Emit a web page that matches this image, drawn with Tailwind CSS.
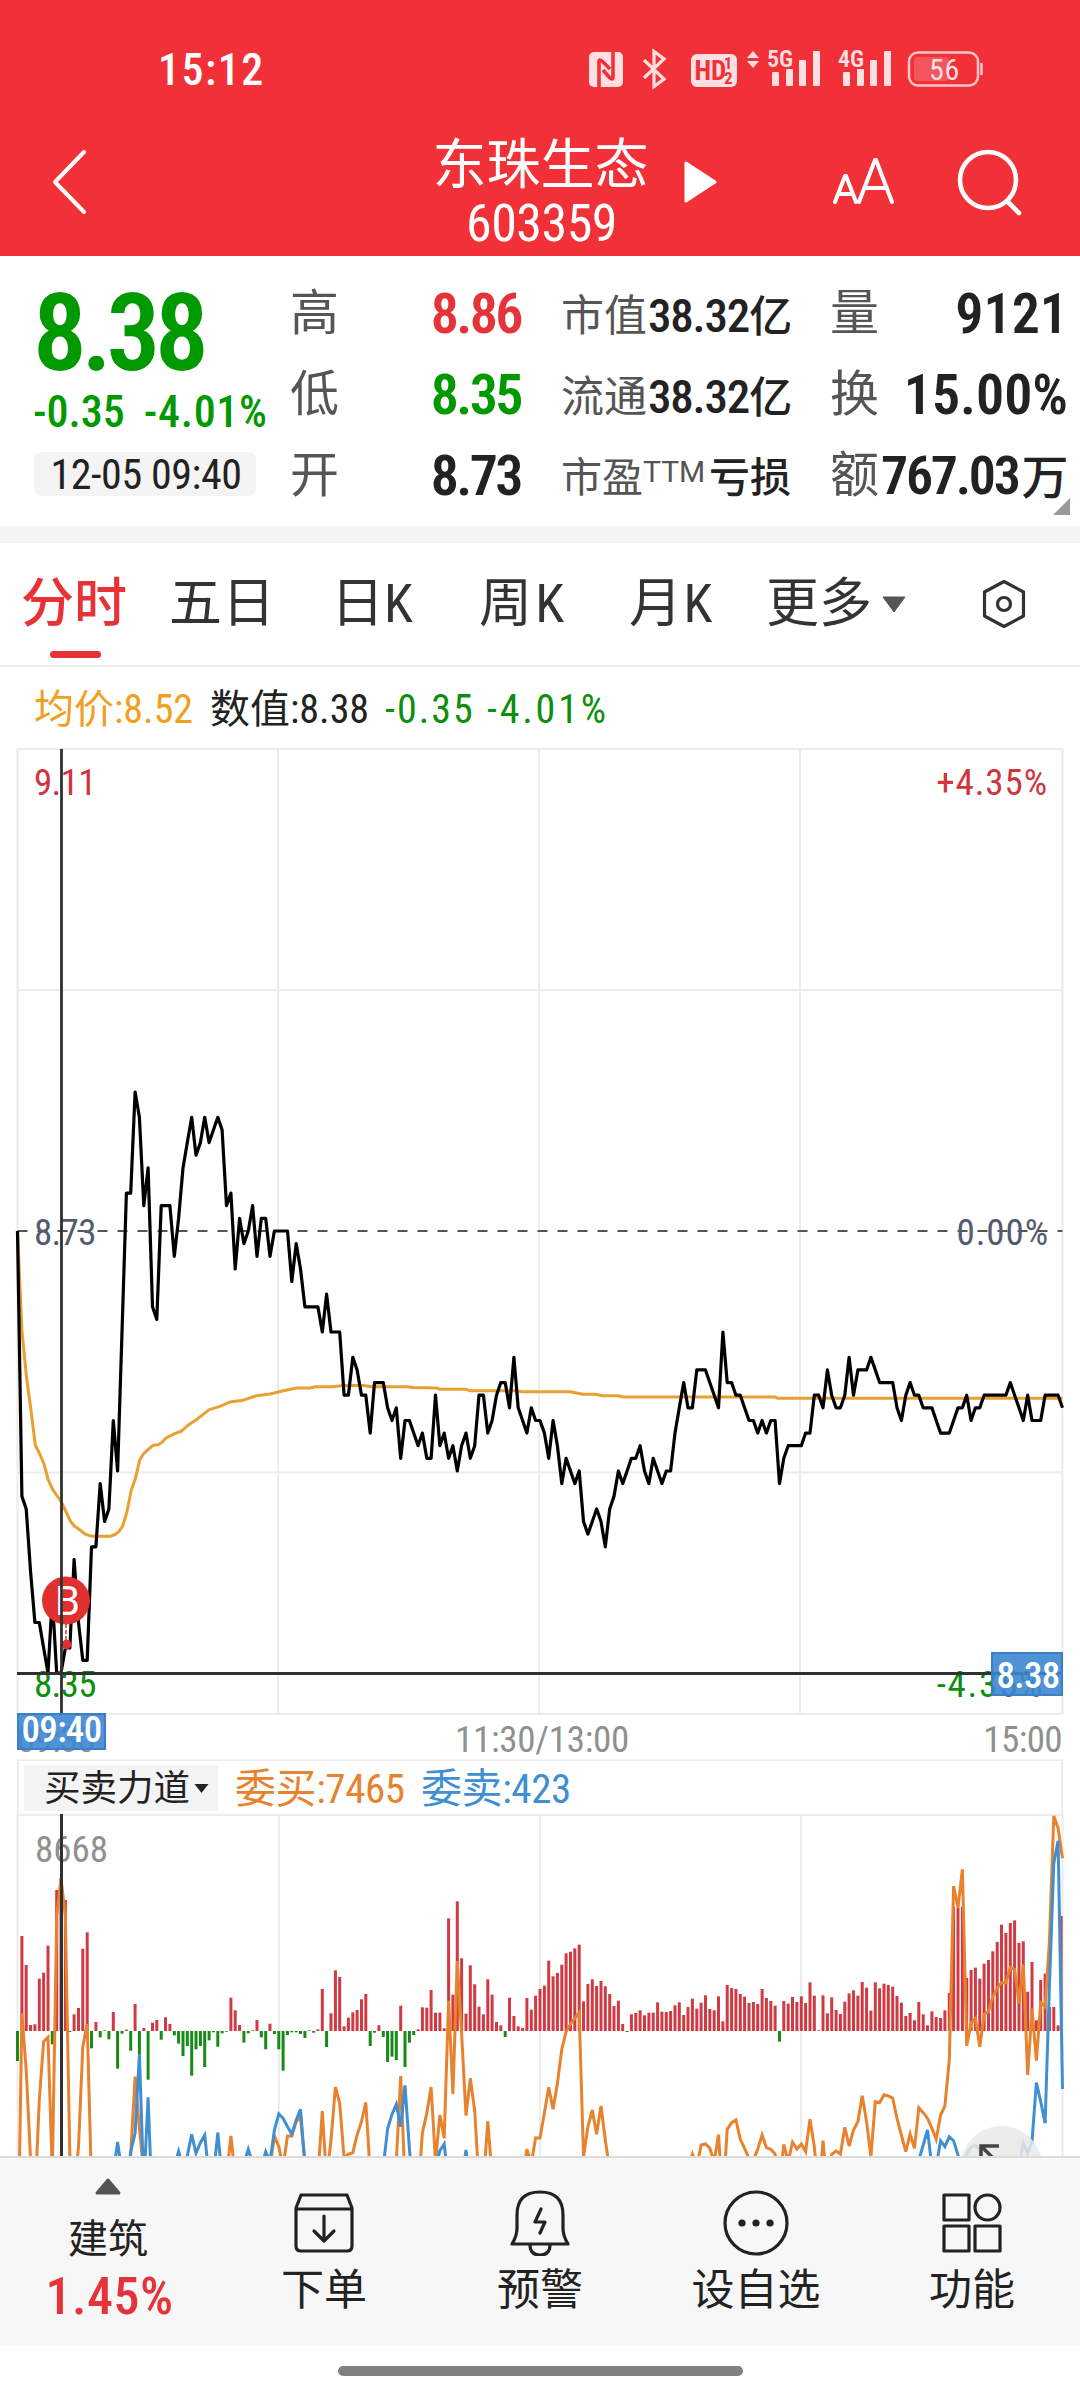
<!DOCTYPE html>
<html lang="zh-CN">
<head>
  <meta charset="UTF-8" />
  <title>东珠生态 603359</title>
  <meta name="viewport" content="width=device-width, initial-scale=1" />
  <script src="https://cdn.jsdelivr.net/npm/@tailwindcss/browser@4"></script>
</head>
<body class="w-[1080px] h-[2400px] overflow-hidden bg-white text-[#222] font-stretch-condensed [font-family:Roboto,'Noto_Sans_CJK_SC',sans-serif]">
  <div class="flex flex-col h-[2400px]">

    <!-- Encabezado -->
    <header class="h-[256px] shrink-0 bg-[#f23038] text-white flex flex-col">
      <div class="h-[138px] shrink-0 flex items-center pl-[158px] pr-[96px]">
        <span class="text-[44px] leading-none tracking-[0.035em] font-medium pt-[2px]">15:12</span>
        <svg class="ml-auto w-[396px] h-[42px] overflow-visible" viewBox="0 0 396 42">
          <g fill="#ffdfe0">
            <rect x="1" y="4" width="34" height="35" rx="5"/>
            <path d="M165 3l6 7h-12zM165 20l6-7h-12z"/>
            <rect x="184" y="24" width="7" height="14" rx="1"/>
            <rect x="198" y="21" width="7" height="17" rx="1"/>
            <rect x="211" y="12" width="7" height="26" rx="1"/>
            <rect x="225" y="3" width="7" height="35" rx="1"/>
            <rect x="255" y="24" width="7" height="14" rx="1"/>
            <rect x="269" y="21" width="7" height="17" rx="1"/>
            <rect x="282" y="12" width="7" height="26" rx="1"/>
            <rect x="296" y="3" width="7" height="35" rx="1"/>
            <rect x="103" y="6" width="46" height="33" rx="6"/>
            <text x="179" y="19" font-size="24" font-weight="600">5G</text>
            <text x="250" y="19" font-size="24" font-weight="600">4G</text>
          </g>
          <path d="M11 39V14q0-4 4 0l7 7M25 4v25q0 4-4 0l-6-7" fill="none" stroke="#f23038" stroke-width="3.6"/>
          <path d="M56 12l20 19-10 7.500V3.500L76 11 56 30" fill="none" stroke="#ffdfe0" stroke-width="3.200"/>
          <g fill="#f23038" font-weight="700">
            <text x="106.500" y="32" font-size="27">HD</text>
            <text x="136" y="21" font-size="16">1</text>
            <text x="136" y="36" font-size="17">2</text>
          </g>
          <rect x="321" y="4.500" width="69" height="33" rx="9" fill="none" stroke="#ffc5c8" stroke-width="2.500"/>
          <rect x="326" y="9" width="35" height="24" rx="4" fill="#f4545b"/>
          <path d="M393.500 15v12" stroke="#ffc5c8" stroke-width="2.500"/>
          <text x="356.500" y="31.500" font-size="30" fill="#ffdfe0" text-anchor="middle" letter-spacing="0.600">56</text>
        </svg>
      </div>
      <div class="grow flex items-start relative">
        <svg class="ml-[51px] mt-[11px] w-[38px] h-[66px]" viewBox="0 0 38 66" fill="none" stroke="#fff" stroke-width="4" stroke-linecap="round" stroke-linejoin="round"><path d="M33 3L4 33l29 30"/></svg>
        <div class="absolute left-[1px] right-0 top-[3px] text-center">
          <h1 class="text-[54px] leading-[50px] whitespace-nowrap">东珠生态</h1>
          <p class="text-[52px] leading-[65px] tracking-[-0.01em] pl-[2px]">603359</p>
        </div>
        <svg class="absolute left-[683px] top-[22px] w-[36px] h-[44px]" viewBox="0 0 36 44"><path d="M3 3v38l29-19z" fill="#fff" stroke="#fff" stroke-width="3" stroke-linejoin="round"/></svg>
        <svg class="ml-auto mt-[17px] w-[62px] h-[50px]" viewBox="0 0 62 50" fill="none" stroke="#fff" stroke-width="4" stroke-linejoin="round" stroke-linecap="round"><path d="M3 47l10-26h1l10 26M6 39h15M27 47L43 5h1l16 42M33 33h22"/></svg>
        <svg class="ml-[62px] mr-[56px] mt-[9px] w-[68px] h-[70px]" viewBox="0 0 68 70" fill="none" stroke="#fff" stroke-width="4.600" stroke-linecap="round"><circle cx="32" cy="33" r="28"/><path d="M51 54l12 12"/></svg>
      </div>
    </header>

    <!-- Cotización -->
    <section class="h-[270px] shrink-0 flex relative">
      <div class="w-[256px] shrink-0 pl-[33px] pt-[28px] text-[#090]">
        <p class="text-[107px] leading-[100px] font-semibold tracking-[-0.05em]">8.38</p>
        <p class="flex gap-[19px] text-[44px] leading-[56px] font-medium whitespace-nowrap"><span>-0.35</span><span class="tracking-[0.015em]">-4.01%</span></p>
        <p class="mt-[12px] ml-[1px] w-[222px] h-[44px] rounded-lg bg-[#f4f4f4] text-[#222] text-[42px] leading-[46px] tracking-[-0.01em] pl-[2px] text-center whitespace-nowrap">12-05 09:40</p>
      </div>
      <dl class="w-[231px] ml-[34px] pt-[17px] text-[56px] font-semibold">
        <div class="h-[81px] flex items-center justify-between"><dt class="text-[49px] font-normal text-[#555]">高</dt><dd class="text-[#e6333a] tracking-[-0.045em]">8.86</dd></div>
        <div class="h-[81px] flex items-center justify-between"><dt class="text-[49px] font-normal text-[#555]">低</dt><dd class="text-[#090] tracking-[-0.045em]">8.35</dd></div>
        <div class="h-[81px] flex items-center justify-between"><dt class="text-[49px] font-normal text-[#555]">开</dt><dd class="tracking-[-0.045em]">8.73</dd></div>
      </dl>
      <dl class="w-[230px] ml-[40px] pt-[20px] text-[47px] font-medium whitespace-nowrap">
        <div class="h-[81px] flex items-center justify-between"><dt class="text-[43px] font-normal text-[#555]">市值</dt><dd class="tracking-[-0.025em]">38.32<span class="text-[43px]">亿</span></dd></div>
        <div class="h-[81px] flex items-center justify-between"><dt class="text-[43px] font-normal text-[#555]">流通</dt><dd class="tracking-[-0.025em]">38.32<span class="text-[43px]">亿</span></dd></div>
        <div class="h-[81px] flex items-center justify-between"><dt class="flex text-[41px] font-normal text-[#555]">市盈<span class="text-[30px] leading-[48px] font-normal font-stretch-normal">TTM</span></dt><dd class="text-[41px]">亏损</dd></div>
      </dl>
      <dl class="w-[238px] ml-[39px] pt-[17px] text-[56px] font-semibold whitespace-nowrap">
        <div class="h-[81px] flex items-center justify-between"><dt class="text-[49px] font-normal text-[#555]">量</dt><dd class="pl-[2px]">9121</dd></div>
        <div class="h-[81px] flex items-center justify-between"><dt class="text-[49px] font-normal text-[#555]">换</dt><dd>15.00%</dd></div>
        <div class="h-[81px] flex items-center"><dt class="text-[49px] font-normal text-[#555]">额</dt><dd class="text-[54px] ml-[2px] tracking-[-0.042em]">767.03<span class="text-[47px] font-medium ml-[3px]">万</span></dd></div>
      </dl>
      <svg class="absolute right-[9px] bottom-[10px] w-[19px] h-[19px]" viewBox="0 0 19 19"><path d="M18 1v17H1z" fill="#999"/></svg>
    </section>
    <div class="h-[17px] shrink-0 bg-[#f4f4f4]"></div>

    <!-- Pestañas -->
    <nav class="h-[124px] shrink-0 border-b-2 border-[#ececec] flex text-[53px] leading-[123px] text-[#333] whitespace-nowrap">
      <div class="w-[106px] ml-[21px] text-[#e93138] font-medium relative">分时<span class="absolute left-[29px] top-[108px] w-[51px] h-[7px] rounded-full bg-[#e93138]"></span></div>
      <div class="w-[168px] ml-[42px]">五日</div>
      <div class="w-[142px] -ml-[6px]">日K</div>
      <div class="w-[150px] ml-[6px] tracking-[0.06em]">周K</div>
      <div class="w-[137px] tracking-[0.03em]">月K</div>
      <div class="w-[140px] flex items-center">更多<svg class="ml-[9px] w-[26px] h-[20px] shrink-0" viewBox="0 0 26 20"><path d="M2 3h22L13 18z" fill="#555" stroke="#555" stroke-linejoin="round"/></svg></div>
      <svg class="ml-[75px] mt-[36px] w-[46px] h-[50px]" viewBox="0 0 46 50" fill="none" stroke="#333" stroke-width="3.200" stroke-linejoin="round"><path d="M23 2.500L42.500 13v24L23 47.500 3.500 37V13z"/><circle cx="23" cy="25" r="6.500"/></svg>
    </nav>

    <div class="h-[81px] shrink-0 flex items-center pl-[34px] pt-[4px] text-[40px] whitespace-nowrap">
      <span class="w-[176px] text-[#f0a020]">均价:8.52</span>
      <span class="w-[175px]">数值:8.38</span>
      <span class="w-[102px] tracking-[0.05em] text-[#0c8f0c]">-0.35</span>
      <span class="tracking-[0.07em] text-[#0c8f0c]">-4.01%</span>
    </div>

    <!-- Gráfico de precio -->
    <svg class="block shrink-0 w-[1080px] h-[1013px]" viewBox="0 0 1080 1013" font-size="37">
      <path d="M17.500 1H1062.500V966H17.500zM17.500 242H1062.500M17.500 724.500H1062.500M278 1V966M539 1V966M800 1V966M17.500 1012.500H1062.500" fill="none" stroke="#ececec" stroke-width="2"/>
      <path d="M17.500 483H1062.500" stroke="#555" stroke-width="2" stroke-dasharray="10 10"/>
      <text x="34" y="46.500" fill="#d0353c" letter-spacing="-0.700">9.11</text>
      <text x="1048" y="46.500" fill="#d0353c" text-anchor="end" letter-spacing="0.900">+4.35%</text>
      <text x="34" y="497" fill="#555a70" letter-spacing="-0.700">8.73</text>
      <text x="1049" y="497" fill="#555a70" text-anchor="end" letter-spacing="0.900">0.00%</text>
      <text x="34" y="949" fill="#0c8f0c" letter-spacing="-0.700">8.35</text>
      <text x="1044" y="949" fill="#0c8f0c" text-anchor="end" letter-spacing="1.700">-4.35%</text>
      <text x="17" y="1004" fill="#909090" letter-spacing="-0.800">09:30</text>
      <text x="542" y="1004" fill="#909090" text-anchor="middle" letter-spacing="-0.300">11:30/13:00</text>
      <text x="1062" y="1004" fill="#909090" text-anchor="end" letter-spacing="-0.600">15:00</text>
      <path id="media" fill="none" stroke="#e8a030" stroke-width="3" stroke-linejoin="round"/>
      <path id="precio" fill="none" stroke="#000" stroke-width="3.200" stroke-linejoin="round"/>
      <path d="M66 873v20" stroke="#fff" stroke-width="5"/>
      <path d="M66 876v16" stroke="#e03030" stroke-width="1.500" stroke-dasharray="4 2"/>
      <circle cx="66" cy="852.500" r="24" fill="#e03030"/>
      <text x="67.500" y="867" font-size="40" fill="#fff" text-anchor="middle" class="font-stretch-normal">B</text>
      <circle cx="66.500" cy="896.500" r="4.800" fill="#e03030"/>
      <path d="M61.500 1V966M17 925.500H1062.500" stroke="#303030" stroke-width="2.800"/>
      <g fill="#3c86d2" fill-opacity="0.900" stroke="#3a7fc8" stroke-width="2">
        <rect x="18" y="966" width="87" height="35"/>
        <rect x="992" y="905" width="70" height="42"/>
      </g>
      <g fill="#fff" font-weight="500">
        <text x="61.500" y="994" text-anchor="middle" letter-spacing="-0.700">09:40</text>
        <text x="1028" y="940" text-anchor="middle" letter-spacing="-0.700">8.38</text>
      </g>
    </svg>

    <!-- Indicador -->
    <div class="h-[53px] shrink-0 mx-[17px] border-x-2 border-[#ececec] flex items-center text-[41px] whitespace-nowrap">
      <button class="ml-[5px] w-[194px] h-[46px] bg-[#f4f4f4] text-[#222] text-[36.5px] leading-[48px] flex items-center pl-[20px] pt-[2px]">买卖力道<svg class="ml-[4px] w-[15px] h-[11px] shrink-0" viewBox="0 0 15 11"><path d="M0.500 1h14L7.500 10z" fill="#222"/></svg></button>
      <span class="w-[186px] ml-[17px] pt-[4px] tracking-[-0.01em] text-[#e8822e]">委买:7465</span>
      <span class="pt-[4px] tracking-[-0.01em] text-[#3f8fd2]">委卖:423</span>
    </div>
    <svg class="block shrink-0 w-[1080px] h-[342px]" viewBox="0 0 1080 342">
      <path d="M17.500 1H1062.500M17.500 0V342M279 0V342M540 0V342M801 0V342M1062.500 0V342" stroke="#ececec" stroke-width="2"/>
      <text x="35" y="48" font-size="37" fill="#909090">8668</text>
      <g id="barras"></g>
      <path id="compra" fill="none" stroke="#e8822e" stroke-width="3"/>
      <path id="venta" fill="none" stroke="#3f8fd2" stroke-width="3"/>
      <path d="M61.500 0V342" stroke="#303030" stroke-width="3"/>
      <circle cx="1001.500" cy="353" r="41" fill="#e9e9e9" fill-opacity="0.850"/>
      <path d="M981 349v-17h18M982 333l18 18" fill="none" stroke="#444" stroke-width="3.500"/>
    </svg>

    <!-- Barra inferior -->
    <footer class="h-[190px] shrink-0 bg-[#f7f7f7] border-t-2 border-[#dcdcdc] grid grid-cols-5 text-[43px] text-center">
      <div class="flex flex-col items-center pt-[19px]">
        <svg class="w-[28px] h-[19px]" viewBox="0 0 28 19"><path d="M14 3l11 13H3z" fill="#555" stroke="#555" stroke-width="3" stroke-linejoin="round"/></svg>
        <span class="mt-[18px] text-[40px] leading-[52px]">建筑</span>
        <span class="text-[52px] leading-[61px] tracking-[0.01em] pl-[3px] font-medium text-[#e6333a]">1.45%</span>
      </div>
      <div class="flex flex-col items-center pt-[32px]">
        <svg class="w-[66px] h-[66px]" viewBox="0 0 66 66" fill="none" stroke="#222" stroke-width="3.200" stroke-linejoin="round" stroke-linecap="round"><path d="M10 5h46l5 13v38q0 5-5 5H10q-5 0-5-5V18zM5 19h56M33 26v24M23 41l10 10 10-10"/></svg>
        <span class="leading-[69px]">下单</span>
      </div>
      <div class="flex flex-col items-center pt-[32px]">
        <svg class="w-[66px] h-[66px]" viewBox="0 0 66 66" fill="none" stroke="#222" stroke-width="3.200" stroke-linejoin="round" stroke-linecap="round"><path d="M5 54q5-8 5-16V25q0-23 23-23t23 23v13q0 8 5 16zM23 55q0 10 10 10t10-10M34 19l-6 13h10l-5 11"/></svg>
        <span class="leading-[69px]">预警</span>
      </div>
      <div class="flex flex-col items-center pt-[32px]">
        <svg class="w-[66px] h-[66px]" viewBox="0 0 66 66" fill="none" stroke="#222" stroke-width="3.200"><circle cx="33" cy="33" r="31"/><g fill="#222" stroke="none"><circle cx="19" cy="33" r="3.600"/><circle cx="33" cy="33" r="3.600"/><circle cx="47" cy="33" r="3.600"/></g></svg>
        <span class="leading-[69px]">设自选</span>
      </div>
      <div class="flex flex-col items-center pt-[32px]">
        <svg class="w-[66px] h-[66px]" viewBox="0 0 66 66" fill="none" stroke="#222" stroke-width="3.200" stroke-linejoin="round"><rect x="5" y="5" width="25" height="25"/><circle cx="48.500" cy="17.500" r="12.500"/><rect x="5" y="36" width="25" height="25"/><rect x="36" y="36" width="25" height="25"/></svg>
        <span class="leading-[69px]">功能</span>
      </div>
    </footer>
    <div class="grow flex justify-center items-start pt-[20px]"><div class="w-[405px] h-[10px] rounded-full bg-[#808080]"></div></div>
  </div>

  <script>
    // Un punto por minuto, 240 minutos de sesión
    const x = i => 17.5 + i * 1045 / 240;

    // Precio en centavos respecto al cierre anterior (8.73)
    const precios = [
      0,-21,-22,-27,-31,-31,-33,-35,-29,-35,-35,-33,-33,-26,-31,-34,-34,-25,-25,-20,
      -23,-22,-15,-19,-8,3,3,11,9,2,5,-6,-7,2,2,2,-2,1,5,7,
      9,6,7,9,7,8,9,8,2,3,-3,1,-1,0,2,-2,1,1,-2,0,
      0,0,0,-4,-1,-3,-6,-6,-6,-6,-8,-5,-8,-8,-8,-13,-13,-10,-11,-13,
      -13,-16,-12,-12,-12,-14,-15,-14,-18,-15,-15,-16,-17,-16,-18,-18,-13,-17,-16,-18,
      -17,-19,-17,-16,-18,-17,-13,-13,-16,-15,-13,-12,-12,-14,-10,-14,-15,-16,-14,-15,
      -15,-16,-18,-15,-17,-20,-18,-19,-20,-19,-23,-24,-23,-22,-23,-25,-22,-21,-19,-20,
      -19,-18,-18,-17,-19,-20,-18,-19,-20,-19,-19,-16,-14,-12,-14,-14,-11,-11,-11,-12,
      -13,-14,-8,-12,-12,-13,-13,-14,-15,-15,-16,-15,-16,-15,-15,-20,-18,-17,-17,-17,
      -17,-16,-16,-13,-13,-14,-11,-13,-14,-14,-13,-10,-13,-11,-11,-11,-10,-11,-12,-12,
      -12,-12,-14,-15,-13,-12,-13,-13,-14,-14,-14,-15,-16,-16,-16,-15,-14,-14,-13,-15,
      -14,-14,-13,-13,-13,-13,-13,-13,-12,-13,-14,-15,-13,-15,-15,-15,-13,-13,-13,-13,-14
    ];
    document.getElementById("precio").setAttribute("d",
      "M" + precios.map((p, i) => `${x(i).toFixed(1)} ${(483 - p * 12.63).toFixed(1)}`).join("L"));

    // Línea de precio medio
    document.getElementById("media").setAttribute("d",
      "M17.5 483L22 584 26.700 631 30.700 660 35.300 697 39.700 706 44 716 48.300 732 52.700 741.500 61.300 754 65.700 763 70.700 773.600 74.300 778 78.700 781 85 786 91.700 788.300 110 788.300 115 786.500 119 783.400 122.700 778 126.700 764.700 131.300 742 135.300 730.800 139.700 712 143.300 706 148.300 701.300 153 697.300 158.300 696.800 161.700 694.600 166 690 174.700 685.700 181.700 683 188.300 677 196.300 671.800 209.300 661.600 220 658.400 230 654 243.300 652.200 256.700 647.700 270 646 283.300 642.800 296.700 640 310 640 315 638.800 333 638.800 343 637.400 363 637.400 372 638.800 407 638.800 413 639.500 437 640 440 641.300 466 641.300 470 642.700 517 642.700 522 643.700 570 643.700 583 646.300 596 646.300 602 647.700 618 647.700 623 649 775 649 778 650.300 1062.500 650.300");

    // Panel inferior: tres unidades por píxel, base en 993
    const y = v => (v - 342) / 3;
    const barras = [
      1083,708,795,975,973,836,818,737,1033,570,535,600,996,943,924,746,697,1045,966,1012,
      991,1018,936,1106,1001,989,1052,912,1062,984,1139,968,960,1019,952,972,1006,1031,1068,1038,
      1127,1048,1038,1101,1021,997,1040,1000,995,893,931,975,1028,1000,991,960,1012,1048,971,1002,
      1048,1112,1005,997,997,1002,1014,991,998,988,867,1041,940,811,831,979,953,937,930,898,
      882,1038,998,976,1011,1086,1070,1080,917,1101,1028,1005,988,922,923,870,938,938,985,655,
      884,604,775,941,796,853,920,943,838,884,966,976,1011,893,948,979,984,894,929,887,
      867,857,782,829,819,794,760,755,745,734,904,852,838,858,843,859,882,918,902,972,
      996,943,939,931,946,938,938,907,935,936,933,916,907,945,921,896,926,908,886,927,
      931,889,964,855,864,867,882,890,909,906,912,867,894,903,917,1025,903,911,891,906,
      889,909,847,887,991,886,940,892,930,942,905,880,871,887,846,863,932,847,865,851,
      855,860,888,908,948,939,961,906,943,976,934,951,954,931,879,620,624,620,834,810,
      803,836,791,780,754,726,674,699,669,661,729,724,875,786,961,840,821,921,921,976,648
    ];
    document.getElementById("barras").innerHTML = barras.map((v, i) => {
      const sube = v < 993;
      const alto = Math.max(Math.abs(993 - v) / 3, 0.7);
      const ancho = i === 240 ? 1.6 : 3;
      return `<rect x="${(x(i) - 1.5).toFixed(1)}" y="${sube ? 217 - alto : 217}" width="${ancho}" height="${alto}" fill="${sube ? '#d03a42' : '#188a18'}"/>`;
    }).join("");

    // Tramos: [minuto inicial, valores]
    const trazar = (id, tramos) => document.getElementById(id).setAttribute("d",
      tramos.map(([ini, vals]) => "M" + vals.map((v, k) => `${x(ini + k).toFixed(1)} ${y(v).toFixed(1)}`).join("L")).join(""));

    trazar("compra", [
      [0, [1770,940,1110,1380,1500,1200,1025,1012,1420,650,535,650,1365,1480,1340,1040,972,1450]],
      [25, [1600,1365,1130,1285,1420]],
      [48, [1430,1308,1430]],
      [58, [1400,1308,1340,1400,1308,1308,1265,1252,1390]],
      [69, [1430,1233,1440,1320,1161,1210,1375,1362,1358,1305,1265,1207,1420]],
      [87, [1385,1128,1450]],
      [91, [1600,1480,1298,1240,1161,1385,1245,1315,902,1182,783,1000,1247,1135,1232,1450,1450,1263,1430]],
      [116, [1430,1348,1390,1314,1314,1238,1162,1228,1150,1048,995,972,955,937,1370,1280,1230,1303,1218,1320,1410]],
      [154, [1400,1363,1400,1335,1332,1345,1385,1304,1500,1288,1268,1260,1318,1345,1375,1380,1348,1305,1343,1348,1362,1450,1333,1385,1327,1347,1332,1355,1258,1340,1480,1322,1470,1363,1353,1362,1282,1338,1290,1265,1187,1265,1370,1205,1208,1184,1188,1195,1255,1305,1355,1302,1345,1223,1238,1255,1285,1318,1245,1218,1080,558,624,508,1037,970,955,1040,943,935,890,865,848,848,802,808,910,793,1125,926,1082,908,920,725,348,385,475]]
    ]);
    trazar("venta", [
      [22, [1420,1326,1420]],
      [25, [1450,1355,1300,1062,1460,1192,1540]],
      [36, [1400,1354,1400]],
      [38, [1450,1368,1303,1360,1328,1306,1430,1430,1298,1430]],
      [52, [1390,1348,1390]],
      [56, [1400,1355,1385,1290,1242,1255,1280,1302,1260,1228,1390]],
      [84, [1400,1286,1243,1213,1280,1156,1345,1500]],
      [96, [1400,1352,1332,1450]],
      [102, [1450,1350,1450]],
      [206, [1450,1380,1335,1290,1400,1400,1322,1340,1310,1322,1365,1400,1360,1343,1336,1350,1400]],
      [230, [1400,1330,1360,1325,1148,1205,1270,860,490,422,1167]]
    ]);
  </script>
</body>
</html>
